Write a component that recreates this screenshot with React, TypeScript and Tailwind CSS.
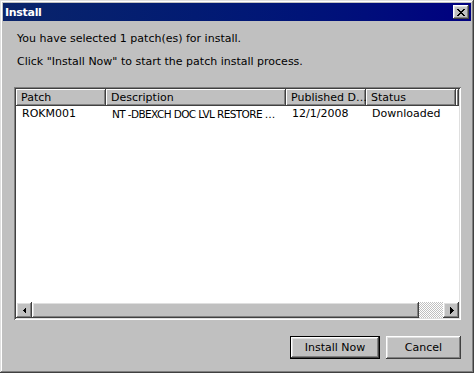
import React from 'react';

const raised =
  "shadow-[inset_-1px_-1px_#404040,inset_1px_1px_#fff,inset_-2px_-2px_#808080,inset_2px_2px_#dfdfdf]";
const headerCell =
  "shadow-[inset_-1px_-1px_#404040,inset_1px_1px_#fff,inset_-2px_-2px_#808080]";

const columns = [
  { label: "Patch", w: "w-[90px]" },
  { label: "Description", w: "w-[180px]" },
  { label: "Published D…", w: "w-[80px]" },
  { label: "Status", w: "w-[90px]" },
];

const row = ["ROKM001", "NT -DBEXCH DOC LVL RESTORE …", "12/1/2008", "Downloaded"];

// pixel X like the classic caption close glyph
const closeX = [
  "XX....XX",
  ".XX..XX.",
  "..XXXX..",
  "...XX...",
  "..XXXX..",
  ".XX..XX.",
  "XX....XX",
];

const CloseGlyph = () => (
  <svg width="8" height="7" viewBox="0 0 8 7" shapeRendering="crispEdges">
    {closeX.flatMap((line, y) =>
      line.split("").map((c, x) =>
        c === "X" ? <rect key={`${x}-${y}`} x={x} y={y} width="1" height="1" fill="#000" /> : null
      )
    )}
  </svg>
);

const Arrow = ({ dir }: { dir: "left" | "right" }) => (
  <svg width="4" height="7" viewBox="0 0 4 7" shapeRendering="crispEdges">
    {dir === "left" ? (
      <polygon points="4,0 4,7 0.5,3.5" fill="#000" />
    ) : (
      <polygon points="0,0 0,7 3.5,3.5" fill="#000" />
    )}
  </svg>
);

export default function App() {
  return (
    <div className="w-[474px] h-[373px] bg-[#c0c0c0] p-[3px] flex flex-col font-['DejaVu_Sans',sans-serif] text-[11px] text-black shadow-[inset_-1px_-1px_#404040,inset_1px_1px_#dfdfdf,inset_-2px_-2px_#808080,inset_2px_2px_#fff]">
      {/* Title bar */}
      <div className="h-[18px] flex items-center justify-between bg-gradient-to-r from-[#0a246a] to-[#000080] pl-[2px] pr-[2px]">
        <span className="text-white font-bold tracking-[-0.3px] leading-[13px]">Install</span>
        <div className={`w-4 h-[14px] bg-[#c0c0c0] flex items-center justify-center ${raised}`}>
          <CloseGlyph />
        </div>
      </div>

      {/* Body */}
      <div className="flex-1 flex flex-col pl-[11px] pr-[10px] pt-[11px] pb-[11px]">
        <p className="pl-[3px] leading-[13px]">You have selected 1 patch(es) for install.</p>
        <p className="pl-[3px] leading-[13px] mt-[10px]">Click "Install Now" to start the patch install process.</p>

        {/* List view */}
        <div className="mt-[19px] h-[233px] p-[2px] bg-white flex flex-col shadow-[inset_1px_1px_#808080,inset_-1px_-1px_#fff,inset_2px_2px_#404040,inset_-2px_-2px_#dfdfdf]">
          <div className="h-[17px] flex bg-[#c0c0c0]">
            {columns.map((c) => (
              <div key={c.label} className={`${c.w} ${headerCell} pl-[5px] flex items-center leading-[13px] whitespace-nowrap overflow-hidden`}>
                {c.label}
              </div>
            ))}
            <div className={`flex-1 ${headerCell}`} />
          </div>
          <div className="flex h-[16px] leading-[16px]">
            <div className="w-[90px] pl-[6px] whitespace-nowrap overflow-hidden">{row[0]}</div>
            <div className="w-[180px] pl-[6px] whitespace-nowrap overflow-hidden text-[10.5px] tracking-[-0.6px]">{row[1]}</div>
            <div className="w-[80px] pl-[6px] whitespace-nowrap overflow-hidden">{row[2]}</div>
            <div className="w-[90px] pl-[6px] whitespace-nowrap overflow-hidden">{row[3]}</div>
          </div>
          <div className="flex-1" />
          {/* Horizontal scrollbar */}
          <div className="h-4 flex">
            <div className={`w-4 bg-[#c0c0c0] flex items-center justify-center pr-[1px] ${raised}`}>
              <Arrow dir="left" />
            </div>
            <div className={`w-[387px] bg-[#c0c0c0] ${raised}`} />
            <div className="flex-1 bg-[repeating-conic-gradient(#c0c0c0_0_25%,#fff_0_50%)] bg-[length:2px_2px]" />
            <div className={`w-4 bg-[#c0c0c0] flex items-center justify-center pl-[1px] ${raised}`}>
              <Arrow dir="right" />
            </div>
          </div>
        </div>

        {/* Buttons */}
        <div className="mt-auto flex justify-end gap-[6px]">
          <button className="w-[90px] h-[23px] border border-black bg-[#c0c0c0] leading-[13px] shadow-[inset_-1px_-1px_#404040,inset_1px_1px_#fff,inset_-2px_-2px_#808080,inset_2px_2px_#dfdfdf]">
            Install Now
          </button>
          <button className={`w-[75px] h-[23px] bg-[#c0c0c0] leading-[13px] ${raised}`}>
            Cancel
          </button>
        </div>
      </div>
    </div>
  );
}
